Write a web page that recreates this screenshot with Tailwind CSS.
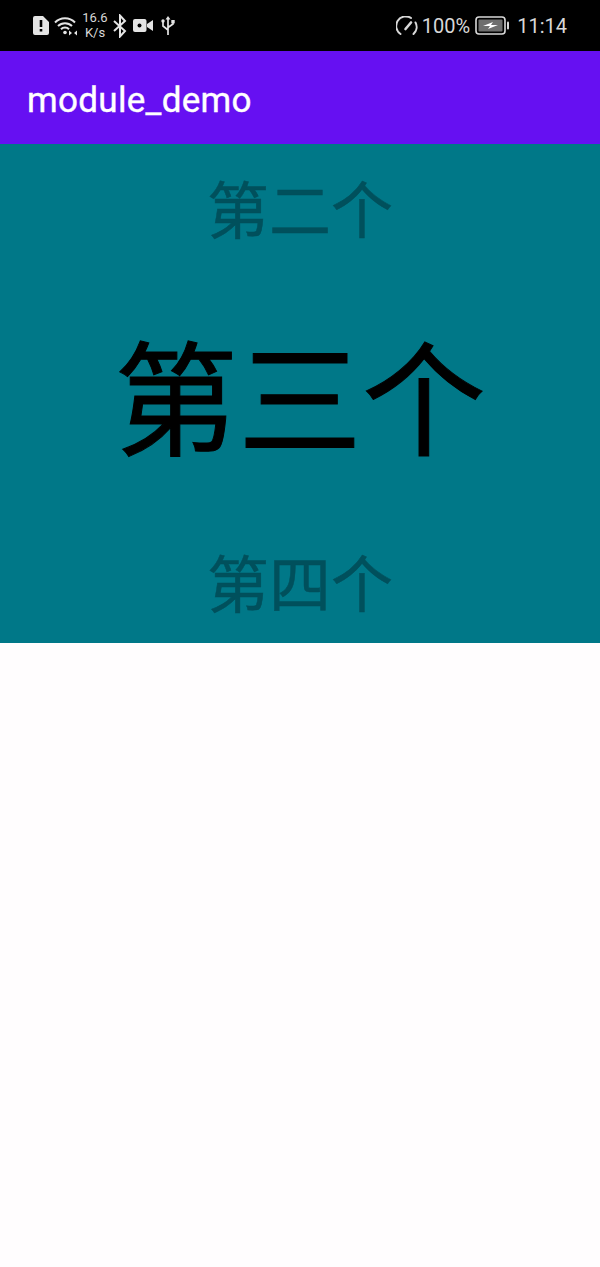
<!DOCTYPE html>
<html lang="zh">
<head>
  <meta charset="UTF-8">
  <title>module_demo</title>
  <script src="https://cdn.jsdelivr.net/npm/@tailwindcss/browser@4"></script>
</head>
<body class="bg-[#fffdfe] font-['Roboto','Noto_Sans_CJK_SC',sans-serif] w-[600px] h-[1267px] overflow-hidden">
  <!-- Status bar -->
  <div class="h-[51px] bg-black flex items-center justify-between pl-[33px] pr-[33px] text-[#d8d8d8]">
    <div class="flex items-center">
      <svg class="w-[16px] h-[19px]" viewBox="0 0 16 19"><path fill="#e4e4e4" fill-rule="evenodd" d="M2 0h8l6 6v11a2 2 0 0 1-2 2H2a2 2 0 0 1-2-2V2a2 2 0 0 1 2-2zM6.700 4v7h2.600V4zM6.700 13v2.600h2.600V13z"/></svg>
      <svg class="w-[23px] h-[20px] ml-[5px]" viewBox="0 0 23 20" fill="none" stroke="#e4e4e4" stroke-width="2"><path d="M1 6.500a14 14 0 0 1 20 0M4 10a10 10 0 0 1 14 0M7 13.300a5.500 5.500 0 0 1 8 0"/><circle cx="11" cy="16.500" r="1.800" fill="#e4e4e4" stroke="none"/><path fill="#e4e4e4" stroke="none" d="M15 14.500l3 2.500-3 2.500zM23 14.500l-3 2.500 3 2.500z"/></svg>
      <div class="ml-[5px] w-[26px] flex flex-col items-center text-[13px] leading-[15px] mb-[1px]"><span>16.6</span><span>K/s</span></div>
      <svg class="w-[14px] h-[24px] ml-[5px]" viewBox="0 0 14 24" fill="none" stroke="#e4e4e4" stroke-width="2"><path d="M1 7l11 10-5 5.500V1.500L12 7 1 17"/></svg>
      <svg class="w-[20px] h-[13px] ml-[6px]" viewBox="0 0 20 13"><rect width="13.500" height="13" rx="2" fill="#e4e4e4"/><circle cx="6.500" cy="6.500" r="2" fill="#000"/><path fill="#e4e4e4" d="M14 5l6-4v11l-6-4z"/></svg>
      <svg class="w-[14px] h-[20px] ml-[8px]" viewBox="0 0 14 20" fill="none" stroke="#e4e4e4" stroke-width="1.700"><path d="M7 3v16M2 6v4l5 4M12 6v2l-5 3.500"/><path fill="#e4e4e4" stroke="none" d="M7 0l2.500 3.500h-5z"/><circle cx="2" cy="5" r="1.700" fill="#e4e4e4" stroke="none"/><rect x="10.300" y="4" width="3.400" height="3.400" fill="#e4e4e4" stroke="none"/></svg>
    </div>
    <div class="flex items-center">
      <svg class="w-[22px] h-[20px]" viewBox="0 0 22 20" fill="none" stroke="#d8d8d8" stroke-width="2" stroke-linecap="round"><path d="M4.500 18A9.500 9.500 0 0 1 15 2M19.500 6.500a9.500 9.500 0 0 1-2 11.500"/><path d="M9.500 13L15 6.500" stroke-width="2.600"/></svg>
      <span class="ml-[4px] text-[20px] leading-none">100%</span>
      <svg class="w-[34px] h-[19px] ml-[5px]" viewBox="0 0 34 19"><rect x="1" y="1" width="29" height="17" rx="3" fill="none" stroke="#d8d8d8" stroke-width="1.600"/><rect x="3.500" y="3.500" width="24" height="12" rx="1" fill="#6e6e6e"/><path fill="#fff" d="M8 10l10-4-2 3 7 0-10 4 2-3z"/><rect x="32" y="5.500" width="2" height="8" rx="1" fill="#d8d8d8"/></svg>
      <span class="ml-[8px] text-[20px] leading-none">11:14</span>
    </div>
  </div>

  <!-- App bar -->
  <div class="h-[93px] bg-[#6610f2] flex items-center pl-[27px] pt-[5px]">
    <h1 class="text-white text-[35px] leading-none font-normal tracking-[0.3px] [-webkit-text-stroke:0.4px_white]">module_demo</h1>
  </div>

  <!-- Picker -->
  <div class="h-[499px] bg-[#007888] flex flex-col items-center font-['Noto_Sans_CJK_SC',sans-serif]">
    <div class="h-[126px] flex items-center text-[62px] leading-none text-[#00505c] [-webkit-text-stroke:0.5px_#00505c]">第二个</div>
    <div class="h-[244px] flex items-center text-[124px] leading-none text-black [-webkit-text-stroke:1px_black]">第三个</div>
    <div class="h-[129px] pt-[4px] flex items-center text-[62px] leading-none text-[#00505c] [-webkit-text-stroke:0.5px_#00505c]">第四个</div>
  </div>
</body>
</html>
